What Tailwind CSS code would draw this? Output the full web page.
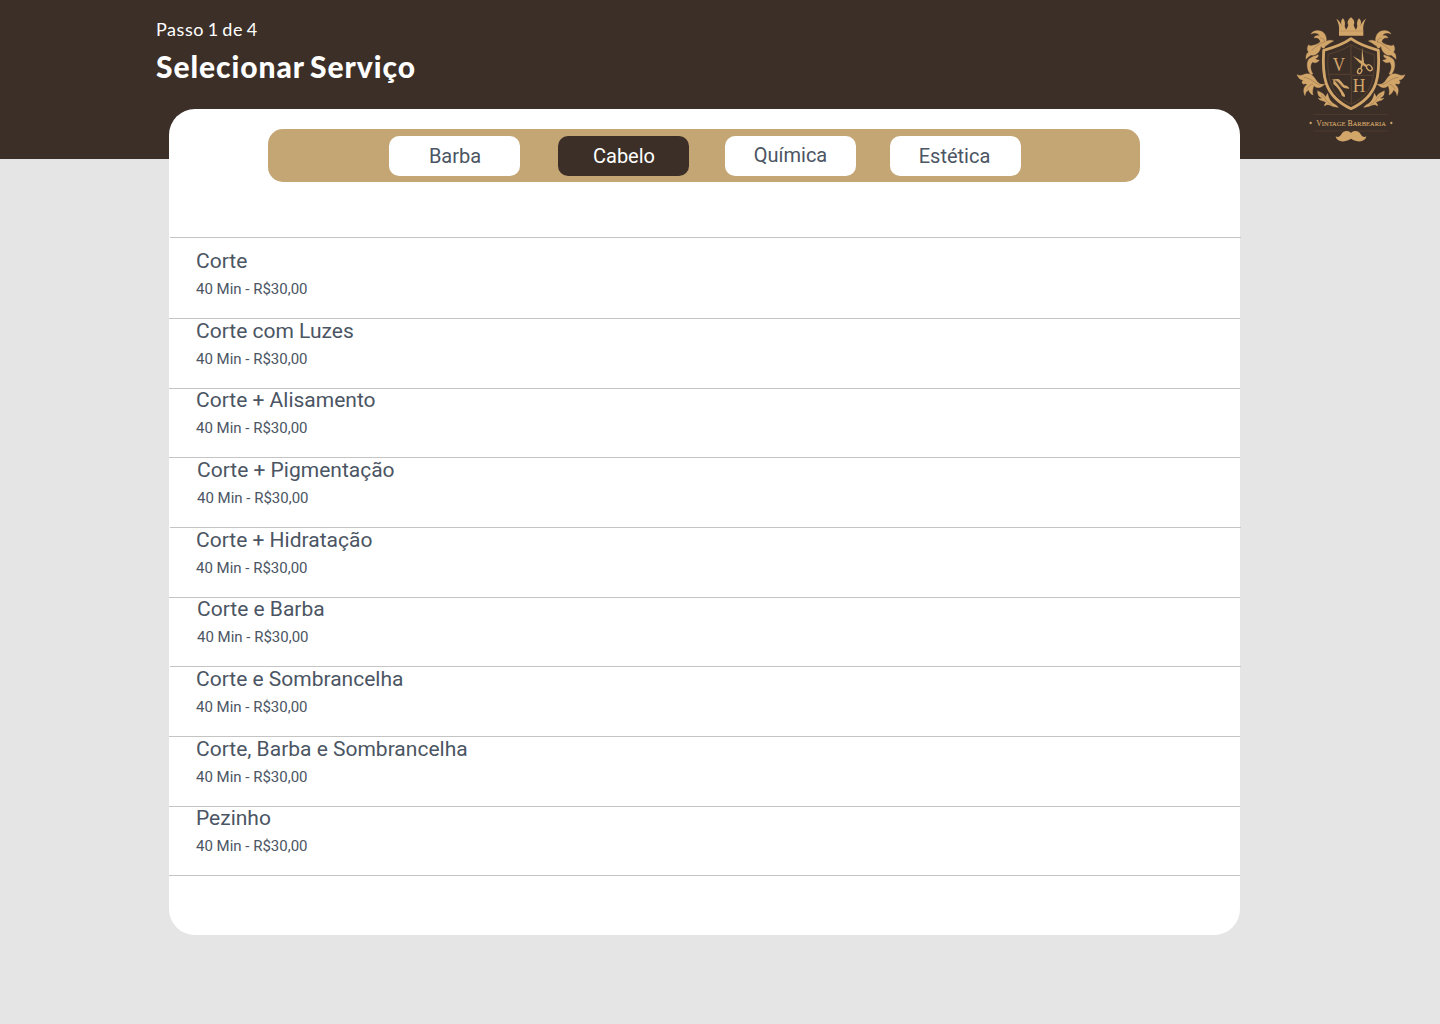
<!DOCTYPE html>
<html lang="pt-BR">
<head>
<meta charset="utf-8">
<title>Vintage Barbearia</title>
<script src="https://cdn.jsdelivr.net/npm/@tailwindcss/browser@4"></script>
</head>
<body class="h-[1024px] overflow-hidden bg-[#e5e5e5] font-[Roboto,sans-serif] text-[#4b5563]">
<header class="flex h-[159px] items-start justify-between bg-[#3c2f28] pl-[156px] pr-[25px] text-white">
  <div class="pt-[17px] font-[Lato,sans-serif]">
    <p class="h-6 text-[18px] leading-6 tracking-[0.55px] [word-spacing:-1.5px] whitespace-nowrap">Passo 1 de 4</p>
    <h1 class="mt-[5px] h-10 text-[30px] leading-10 font-black tracking-[0.95px] [word-spacing:-2.5px] whitespace-nowrap">Selecionar Serviço</h1>
  </div>
  <svg class="mt-[5px] h-[150px] w-[130px]" viewBox="0 0 390 450" fill="#d2a569" aria-label="Vintage Barbearia">
    <defs>
      <g id="leaves">
        <path stroke="#d2a569" stroke-width="1" d="M146 108C138 104 130 106 124 109C126 94 118 78 101 77C90 76 81 80 78 87C90 81 101 85 104 93C96 90 88 93 87 99C98 96 105 103 106 110C100 117 91 119 84 121C77 124 73 122 71 119C66 127 65 135 71 142C66 144 62 149 63 163C67 156 73 155 78 150C90 153 101 144 105 134C107 130 107 126 108 123C112 132 119 131 121 123C128 120 136 112 146 108Z"/>
        <path stroke="#d2a569" stroke-width="1" d="M99 149C92 153 77 154 70 165C64 177 66 195 77 209L84 207C75 193 75 180 82 171C89 175 98 174 103 165C96 166 92 163 91 160C97 159 102 154 99 149Z"/>
        <path stroke="#d2a569" stroke-width="1" d="M120 237C106 241 97 233 91 222C83 208 68 203 55 209C46 213 42 211 36 209C40 219 46 225 55 225C49 229 50 235 56 238C61 235 64 236 66 239C56 244 53 257 60 272C61 263 65 258 71 255C73 263 77 267 84 270C81 259 84 248 87 242C95 251 108 250 120 237Z"/>
        <path stroke="#d2a569" stroke-width="1" d="M98 257C97 270 103 277 111 278C108 282 103 281 99 279C106 290 119 286 123 293C119 296 117 300 119 303C126 296 133 300 139 302C146 305 153 306 160 307C156 300 147 297 142 293C133 286 130 274 128 265C124 270 124 274 121 276C118 265 108 263 98 257Z"/>
        <g fill="none" stroke="#3c2f28" stroke-width="1" opacity=".7">
          <path d="M120 110C108 114 99 120 80 136M105 99C114 98 118 104 120 112"/>
          <path d="M104 239C92 239 80 219 56 217M84 237C75 239 67 248 65 254"/>
          <path d="M108 269C121 276 121 292 141 299"/>
        </g>
      </g>
    </defs>
    <path d="M162 92V77C164 66 160 52 154 41C163 47 168 55 171 63C166 51 169 44 174 40C180 47 181 55 179 64L183 74C187 70 188 65 190 61C185 51 190 43 198 37C206 43 211 51 206 61C208 65 209 70 213 74L217 64C215 55 216 47 222 40C228 45 230 52 226 63C229 55 234 47 243 41C236 53 233 66 235 77V92Z"/>
    <path d="M163 78H234" stroke="#a98152" stroke-width="1.5"/>
    <use href="#leaves"/>
    <use href="#leaves" transform="translate(396 0) scale(-1 1)"/>
    <path d="M198 101C173 119 145 128 116 136C112 205 113 272 198 311C283 272 284 205 280 136C251 128 223 119 198 101Z" fill="none" stroke="#d2a569" stroke-width="8.5" stroke-linejoin="round"/>
    <g fill="none" stroke="#5e4632" stroke-width="2.5">
      <path d="M198 119C178 134 154 141 130 148C127 167 128 187 131 208H198ZM199 211H265C260 247 244 275 199 298ZM198 119C220 134 244 141 267 149C269 171 268 190 265 211M131 208C136 246 153 277 198 298"/>
    </g>
    <path d="M204 153L230 168L246 181L242 186L224 174ZM231 126L237 172L230 190L226 188L230 170Z"/>
    <g fill="none" stroke="#d2a569">
      <ellipse cx="224" cy="198" rx="6" ry="8" transform="rotate(24 224 198)" stroke-width="4"/>
      <ellipse cx="253" cy="188" rx="10" ry="7" transform="rotate(48 253 188)" stroke-width="4"/>
    </g>
    <path d="M140 224C148 222 158 221 162 223C168 229 174 236 178 241C185 242 190 244 193 251C188 252 179 249 171 246L157 231Z"/>
    <path d="M145 226C154 231 165 246 180 270L179 277L171 273C167 260 157 246 145 237Z"/>
    <path d="M151 226C161 232 168 240 174 249" fill="none" stroke="#3c2f28" stroke-width="2"/>
    <g font-family="'Liberation Serif', serif" text-anchor="middle">
      <text x="162" y="197" font-size="57" textLength="37" lengthAdjust="spacingAndGlyphs">V</text>
      <text x="222" y="261" font-size="57" textLength="38" lengthAdjust="spacingAndGlyphs">H</text>
      <text x="198" y="362" font-size="24" textLength="209" lengthAdjust="spacingAndGlyphs" stroke="#d2a569" stroke-width=".4">V<tspan font-size="20">INTAGE</tspan> B<tspan font-size="20">ARBEARIA</tspan></text>
    </g>
    <circle cx="77" cy="354" r="3.5"/><circle cx="319" cy="354" r="3.5"/>
    <path d="M86 328H310M86 378H310" stroke="#57412f" stroke-width="2"/>
    <path d="M198 384C190 376 176 376 170 386C164 396 158 398 152 394C155 410 176 415 198 401C220 415 241 410 244 394C238 398 232 396 226 386C220 376 206 376 198 384Z"/>
  </svg>
</header>

<main class="relative -mt-[50px] ml-[169px] flex h-[826px] w-[1071px] flex-col rounded-[26px] bg-white pt-5">
  <nav class="ml-[99px] flex h-[53px] w-[872px] shrink-0 rounded-[15px] bg-[#c4a574] pt-[7px] pl-[121px] text-[20px] leading-10">
    <button class="h-10 w-[131px] rounded-[10px] bg-white pl-px">Barba</button>
    <button class="ml-[38px] h-10 w-[131px] rounded-[10px] bg-[#3c2f28] pl-px text-white">Cabelo</button>
    <button class="ml-9 h-10 w-[131px] rounded-[10px] bg-white pb-0.5 leading-[38px]">Química</button>
    <button class="ml-[34px] h-10 w-[131px] rounded-[10px] bg-white pr-[2px]">Estética</button>
  </nav>
  <div class="mt-[55px] ml-px h-px w-[1071px] shrink-0 bg-[#c4c4c4]"></div>
  <ul id="services"></ul>
</main>

<script>
  // [name, row height, text inset, divider inset]
  const services = [
    ['Corte', 81, 27, 0],
    ['Corte com Luzes', 70, 27, 0],
    ['Corte + Alisamento', 69, 27, 0],
    ['Corte + Pigmentação', 70, 28, 1],
    ['Corte + Hidratação', 70, 27, 0],
    ['Corte e Barba', 69, 28, 1],
    ['Corte e Sombrancelha', 70, 27, 0],
    ['Corte, Barba e Sombrancelha', 70, 27, 0],
    ['Pezinho', 69, 27, 0]
  ];
  document.getElementById('services').innerHTML = services.map(([name, height, inset, line]) => `
    <li class="flex w-[1071px] flex-col justify-end" style="height:${height}px">
      <div class="pb-[19px]" style="padding-left:${inset}px">
        <h2 class="mb-[7px] h-[22px] text-[21px] leading-[22px] whitespace-nowrap">${name}</h2>
        <p class="h-5 text-[15px] leading-5 whitespace-nowrap">40 Min - R$30,00</p>
      </div>
      <div class="h-px w-[1071px] shrink-0 bg-[#c4c4c4]" style="margin-left:${line}px"></div>
    </li>`).join('');
</script>
</body>
</html>
